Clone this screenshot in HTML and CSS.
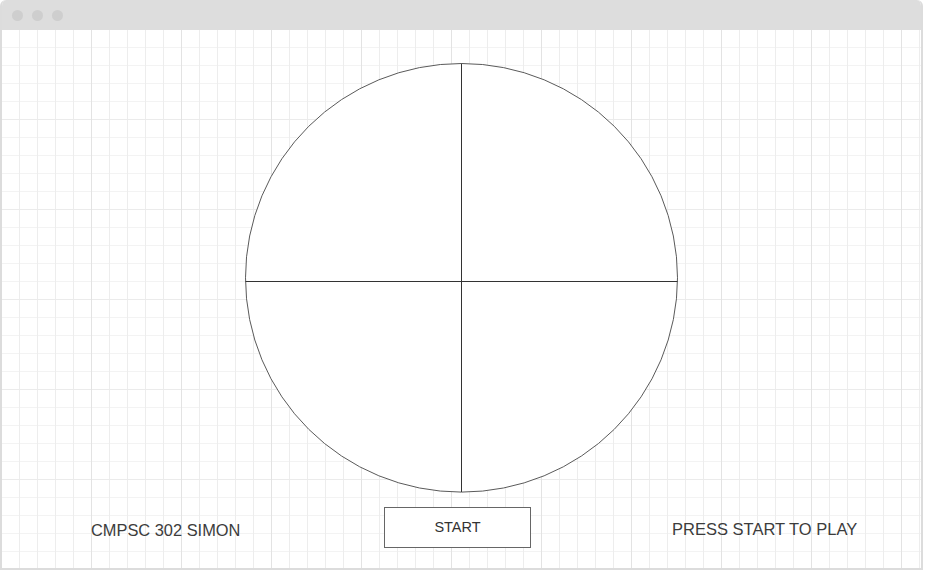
FILE: index.html
```html
<!DOCTYPE html>
<html>
<head>
<meta charset="utf-8">
<link rel="stylesheet" href="styles.css">
</head>
<body>
<div class="frame">
  <div class="titlebar">
    <span class="dot"></span><span class="dot"></span><span class="dot"></span>
  </div>
  <div class="canvas">
    <div class="board">
      <svg class="simon" width="433" height="432" viewBox="0 0 433 432">
        <ellipse cx="216.5" cy="215.8" rx="216" ry="214.3" fill="#fff" stroke="#5a5a5a" stroke-width="1"/>
        <line x1="216.5" y1="1.5" x2="216.5" y2="430" stroke="#333" stroke-width="1"/>
        <line x1="0.5" y1="219.5" x2="432.5" y2="219.5" stroke="#333" stroke-width="1"/>
      </svg>
    </div>
    <div class="controls">
      <div class="title">CMPSC 302 SIMON</div>
      <div class="start">START</div>
      <div class="status">PRESS START TO PLAY</div>
    </div>
  </div>
</div>
</body>
</html>
```

FILE: styles.css
```css
html, body {
  margin: 0;
  padding: 0;
  background: #fff;
}
.frame {
  width: 923px;
  height: 570px;
  box-sizing: border-box;
  border: 2px solid #dcdcdc;
  border-top: 0;
  border-radius: 6px 6px 0 0;
  overflow: hidden;
  display: flex;
  flex-direction: column;
  font-family: "Liberation Sans", Arial, sans-serif;
}
.titlebar {
  height: 30px;
  margin: 0 -2px;
  background: #dddddd;
  display: flex;
  align-items: center;
  gap: 9px;
  padding-left: 12px;
  box-sizing: border-box;
}
.dot {
  width: 11px;
  height: 11px;
  border-radius: 50%;
  background: #cecece;
}
.canvas {
  flex: 1;
  background-color: #fff;
  background-image:
    linear-gradient(to right, transparent 89px, #e3e3e3 89px, #e3e3e3 90px),
    linear-gradient(to bottom, transparent 89px, #ebebeb 89px, #ebebeb 90px),
    linear-gradient(to right, transparent 17px, #ededed 17px, #ededed 18px),
    linear-gradient(to bottom, transparent 17px, #f3f3f3 17px, #f3f3f3 18px);
  background-size: 90px 90px, 90px 90px, 18px 18px, 18px 18px;
  display: flex;
  flex-direction: column;
}
.board {
  display: flex;
  justify-content: center;
  padding-top: 32px;
}
.simon {
  display: block;
}
.controls {
  display: flex;
  align-items: center;
  margin-top: 13px;
  height: 41px;
  padding-left: 89px;
  color: #3c3c3c;
}
.title {
  width: 293px;
  font-size: 16.4px;
  padding-top: 5px;
}
.start {
  width: 147px;
  height: 41px;
  box-sizing: border-box;
  border: 1px solid #666;
  background: #fff;
  display: flex;
  align-items: center;
  justify-content: center;
  font-size: 14.5px;
  color: #333;
  padding-bottom: 2px;
}
.status {
  margin-left: 141px;
  font-size: 16.5px;
  padding-top: 3px;
}
```
